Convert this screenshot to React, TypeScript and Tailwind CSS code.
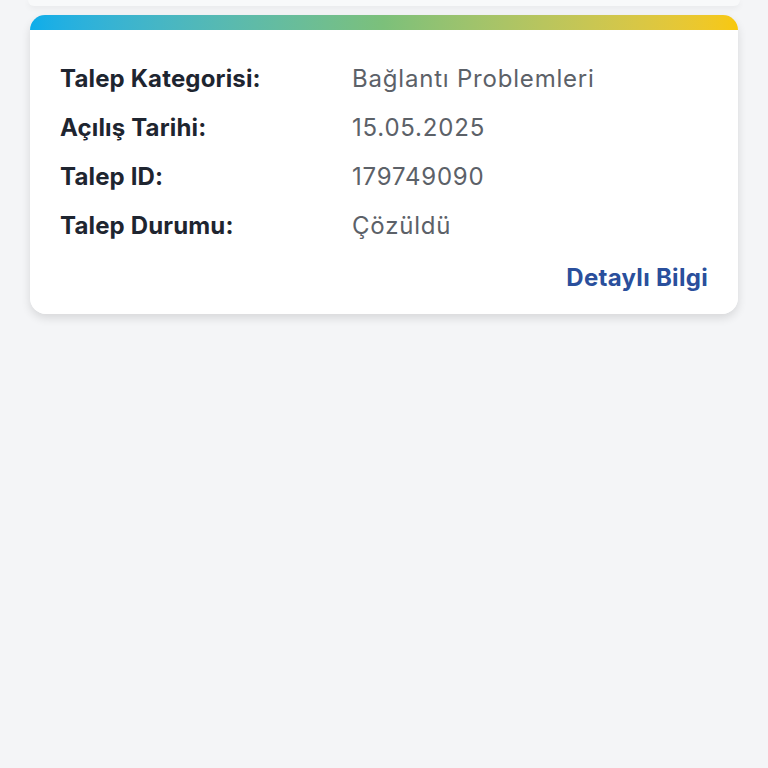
export default function App() {
  const rows = [
    { label: 'Talep Kategorisi:', value: 'Bağlantı Problemleri' },
    { label: 'Açılış Tarihi:', value: '15.05.2025' },
    { label: 'Talep ID:', value: '179749090' },
    { label: 'Talep Durumu:', value: 'Çözüldü' },
  ]

  return (
    <div
      className="min-h-screen w-full bg-[#f4f5f7]"
      style={{ fontFamily: 'Inter, "Noto Sans", sans-serif' }}
    >
      {/* previous card edge */}
      <div className="mx-[28px] h-[6px] rounded-b-[14px] bg-[#f8f9fa] shadow-[0_2px_6px_rgba(0,0,0,0.06)]" />

      <div className="mx-[30px] mt-[9px] rounded-[16px] shadow-[0_4px_10px_rgba(0,0,0,0.12)]">
        <div className="h-[15px] rounded-t-[16px] bg-gradient-to-r from-[#0badea] via-[#7cc07a] to-[#f8c80b]" />
        <div className="rounded-b-[16px] bg-white px-[30px] pb-[20px] pt-[24px]">
          {rows.map((row) => (
            <div key={row.label} className="flex text-[24px] leading-[49px]">
              <div className="w-[292px] shrink-0 font-bold tracking-[0.15px] text-[#1e2530]">{row.label}</div>
              <div className="tracking-[0.8px] text-[#5c6168]">{row.value}</div>
            </div>
          ))}
          <div className="mt-[12px] flex justify-end">
            <span className="text-[24px] font-bold leading-[32px] tracking-[0.3px] text-[#2a4f9c]">Detaylı Bilgi</span>
          </div>
        </div>
      </div>
    </div>
  )
}
